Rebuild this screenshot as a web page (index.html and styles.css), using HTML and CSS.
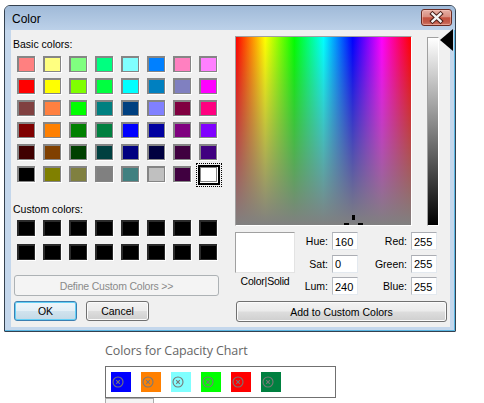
FILE: index.html
```html
<!DOCTYPE html>
<html>
<head>
<meta charset="utf-8">
<link rel="stylesheet" href="styles.css">
</head>
<body>
<div class="screen">
  <div class="dialog">
    <div class="titlebar">
      <span class="title">Color</span>
      <div class="close">
        <svg width="29" height="15" viewBox="0 0 29 15">
          <path d="M10.5 3.8 L18.5 11.2 M18.5 3.8 L10.5 11.2" stroke="#4a1d16" stroke-width="4.4" stroke-linecap="square" fill="none"/>
          <path d="M10.5 3.8 L18.5 11.2 M18.5 3.8 L10.5 11.2" stroke="#f4f4f4" stroke-width="2.4" stroke-linecap="square" fill="none"/>
        </svg>
      </div>
    </div>
    <div class="frame">
      <div class="client">
        <div class="left">
          <div class="lbl basic-lbl">Basic colors:</div>
          <div class="grid basic">
            <div class="sw" style="background:#FF8080"></div><div class="sw" style="background:#FFFF80"></div><div class="sw" style="background:#80FF80"></div><div class="sw" style="background:#00FF80"></div><div class="sw" style="background:#80FFFF"></div><div class="sw" style="background:#0080FF"></div><div class="sw" style="background:#FF80C0"></div><div class="sw" style="background:#FF80FF"></div>
            <div class="sw" style="background:#FF0000"></div><div class="sw" style="background:#FFFF00"></div><div class="sw" style="background:#80FF00"></div><div class="sw" style="background:#00FF40"></div><div class="sw" style="background:#00FFFF"></div><div class="sw" style="background:#0080C0"></div><div class="sw" style="background:#8080C0"></div><div class="sw" style="background:#FF00FF"></div>
            <div class="sw" style="background:#804040"></div><div class="sw" style="background:#FF8040"></div><div class="sw" style="background:#00FF00"></div><div class="sw" style="background:#008080"></div><div class="sw" style="background:#004080"></div><div class="sw" style="background:#8080FF"></div><div class="sw" style="background:#800040"></div><div class="sw" style="background:#FF0080"></div>
            <div class="sw" style="background:#800000"></div><div class="sw" style="background:#FF8000"></div><div class="sw" style="background:#008000"></div><div class="sw" style="background:#008040"></div><div class="sw" style="background:#0000FF"></div><div class="sw" style="background:#0000A0"></div><div class="sw" style="background:#800080"></div><div class="sw" style="background:#8000FF"></div>
            <div class="sw" style="background:#400000"></div><div class="sw" style="background:#804000"></div><div class="sw" style="background:#004000"></div><div class="sw" style="background:#004040"></div><div class="sw" style="background:#000080"></div><div class="sw" style="background:#000040"></div><div class="sw" style="background:#400040"></div><div class="sw" style="background:#400080"></div>
            <div class="sw" style="background:#000000"></div><div class="sw" style="background:#808000"></div><div class="sw" style="background:#808040"></div><div class="sw" style="background:#808080"></div><div class="sw" style="background:#408080"></div><div class="sw" style="background:#C0C0C0"></div><div class="sw" style="background:#400040"></div><div class="sw sel" style="background:#FFFFFF"></div>
          </div>
          <div class="lbl custom-lbl">Custom colors:</div>
          <div class="grid custom">
            <div class="sw"></div><div class="sw"></div><div class="sw"></div><div class="sw"></div><div class="sw"></div><div class="sw"></div><div class="sw"></div><div class="sw"></div>
            <div class="sw"></div><div class="sw"></div><div class="sw"></div><div class="sw"></div><div class="sw"></div><div class="sw"></div><div class="sw"></div><div class="sw"></div>
          </div>
          <div class="btn define">Define Custom Colors &gt;&gt;</div>
          <div class="btnrow">
            <div class="btn ok">OK</div>
            <div class="btn cancel">Cancel</div>
          </div>
        </div>
        <div class="right">
          <div class="pickers">
            <div class="spectrum">
              <svg class="cross" width="175" height="188" viewBox="0 0 175 188">
                <rect x="116" y="178" width="3" height="5" fill="#000"/>
                <rect x="108" y="186" width="5" height="3" fill="#000"/>
                <rect x="122" y="186" width="5" height="3" fill="#000"/>
              </svg>
            </div>
            <div class="lum"></div>
            <svg class="arrow" width="14" height="23" viewBox="0 0 14 23">
              <polygon points="13,0 0,11 13,22" fill="#000"/>
            </svg>
          </div>
          <div class="values">
            <div class="solid">
              <div class="solid-box"></div>
              <div class="solid-lbl">Color|Solid</div>
            </div>
            <div class="fields hsl">
              <label>Hue:</label><input type="text" value="160" readonly>
              <label>Sat:</label><input type="text" value="0" readonly>
              <label>Lum:</label><input type="text" value="240" readonly>
            </div>
            <div class="fields rgb">
              <label>Red:</label><input type="text" value="255" readonly>
              <label>Green:</label><input type="text" value="255" readonly>
              <label>Blue:</label><input type="text" value="255" readonly>
            </div>
          </div>
          <div class="btn add">Add to Custom Colors</div>
        </div>
      </div>
    </div>
  </div>

  <div class="chart-section">
    <div class="caption">Colors for Capacity Chart</div>
    <div class="chart">
      <div class="chip" style="background:#0000FF"><svg class="rm" width="12" height="12" viewBox="0 0 12 12"><circle cx="6" cy="6" r="5"/><path d="M4.2 4.2 L7.8 7.8 M7.8 4.2 L4.2 7.8"/></svg></div>
      <div class="chip" style="background:#FF8000"><svg class="rm" width="12" height="12" viewBox="0 0 12 12"><circle cx="6" cy="6" r="5"/><path d="M4.2 4.2 L7.8 7.8 M7.8 4.2 L4.2 7.8"/></svg></div>
      <div class="chip" style="background:#80FFFF"><svg class="rm" width="12" height="12" viewBox="0 0 12 12"><circle cx="6" cy="6" r="5"/><path d="M4.2 4.2 L7.8 7.8 M7.8 4.2 L4.2 7.8"/></svg></div>
      <div class="chip" style="background:#00FF00"><svg class="rm" width="12" height="12" viewBox="0 0 12 12"><circle cx="6" cy="6" r="5"/><path d="M4.2 4.2 L7.8 7.8 M7.8 4.2 L4.2 7.8"/></svg></div>
      <div class="chip" style="background:#FF0000"><svg class="rm" width="12" height="12" viewBox="0 0 12 12"><circle cx="6" cy="6" r="5"/><path d="M4.2 4.2 L7.8 7.8 M7.8 4.2 L4.2 7.8"/></svg></div>
      <div class="chip" style="background:#008040"><svg class="rm" width="12" height="12" viewBox="0 0 12 12"><circle cx="6" cy="6" r="5"/><path d="M4.2 4.2 L7.8 7.8 M7.8 4.2 L4.2 7.8"/></svg></div>
    </div>
    <div class="under"></div>
  </div>
</div>
</body>
</html>
```

FILE: styles.css
```css
html, body {
  margin: 0;
  background: #fff;
}
body {
  font-family: "Liberation Sans", Arial, sans-serif;
  font-size: 10.5px;
  color: #000;
}
.screen {
  padding: 5px 0 0 4px;
}

/* ---------- dialog window ---------- */
.dialog {
  width: 452px;
  box-sizing: border-box;
  border: 1px solid #34414f;
  border-radius: 6px 6px 1px 1px;
  background: #c4d7ec;
  box-shadow: inset -1px -1px 0 #5ab6e2;
}
.titlebar {
  height: 24px;
  display: flex;
  justify-content: space-between;
  align-items: flex-start;
  padding: 0 3px 0 7px;
  background: linear-gradient(#a0bad8, #bcd1e9);
  border-radius: 5px 5px 0 0;
}
.title {
  font-size: 12px;
  line-height: 24px;
  padding-top: 1px;
}
.close {
  margin-top: 3px;
  width: 31px;
  height: 17px;
  box-sizing: border-box;
  border: 1px solid #6b2b22;
  border-radius: 3px;
  background: linear-gradient(#e6b0a6 0%, #d98e80 45%, #c4513f 52%, #c25a49 80%, #d27a68 100%);
  box-shadow: inset 0 0 0 1px rgba(255, 210, 200, 0.45);
  display: flex;
}
.frame {
  padding: 0 5px 4px 6px;
}
.client {
  background: #f0f0f0;
  width: 439px;
  height: 297px;
  display: flex;
}

/* ---------- left column ---------- */
.left {
  width: 224px;
  flex-shrink: 0;
  display: flex;
  flex-direction: column;
  align-items: flex-start;
}
.lbl {
  line-height: 13px;
  margin-left: 2px;
  white-space: nowrap;
}
.basic-lbl {
  margin-top: 8px;
}
.custom-lbl {
  margin-top: 21px;
}
.grid {
  display: grid;
  grid-template-columns: repeat(8, 18px);
  grid-auto-rows: 16px;
  column-gap: 8px;
  margin-left: 6px;
}
.grid.basic {
  margin-top: 5px;
  row-gap: 6px;
}
.grid.custom {
  margin-top: 4px;
  row-gap: 8px;
}
.sw {
  box-sizing: border-box;
  border-style: solid;
  border-width: 2px 1px 1px 2px;
  border-color: #858585;
  box-shadow: 1px 1px 0 #fff;
  position: relative;
}
.custom .sw {
  background: #000;
  border-color: #2a2a2a;
}
.sw.sel::before {
  content: "";
  position: absolute;
  left: -3px;
  top: -3px;
  right: -4px;
  bottom: -4px;
  border: 2px solid #000;
}
.sw.sel::after {
  content: "";
  position: absolute;
  left: -5px;
  top: -5px;
  right: -6px;
  bottom: -6px;
  border: 1px dotted #000;
}

/* ---------- buttons ---------- */
.btn {
  box-sizing: border-box;
  display: flex;
  align-items: center;
  justify-content: center;
  border: 1px solid #707070;
  border-radius: 3px;
  background: linear-gradient(#f3f3f3 0%, #ebebeb 48%, #dddddd 52%, #cfcfcf 100%);
  box-shadow: inset 0 0 0 1px #fbfbfb;
  white-space: nowrap;
  flex-shrink: 0;
}
.define {
  margin: 15px 0 0 3px;
  width: 205px;
  height: 21px;
  color: #8a8a8a;
  background: #f4f4f4;
  border-color: #adb2b5;
  box-shadow: none;
  letter-spacing: -0.2px;
}
.btnrow {
  display: flex;
  gap: 9px;
  margin: 5px 0 0 3px;
}
.ok, .cancel {
  width: 63px;
  height: 20px;
}
.ok {
  border-color: #3c7fb1;
  box-shadow: inset 0 0 0 1px #63d0f6;
  background: linear-gradient(#eef6fb 0%, #e3eff6 48%, #d0e3ee 52%, #c4d9e6 100%);
}

/* ---------- right column ---------- */
.right {
  flex-shrink: 0;
  display: flex;
  flex-direction: column;
  align-items: flex-start;
}
.pickers {
  display: flex;
  align-items: flex-start;
  margin-top: 6px;
}
.spectrum {
  flex-shrink: 0;
  width: 177px;
  height: 190px;
  box-sizing: border-box;
  border: 1px solid;
  border-color: #a0a0a0 #fff #fff #a0a0a0;
  position: relative;
  overflow: hidden;
  background:
    linear-gradient(to bottom, rgba(128, 128, 128, 0), #808080),
    linear-gradient(to right, #ff0000 0%, #ffff00 16.67%, #00ff00 33.33%, #00ffff 50%, #0000ff 66.67%, #ff00ff 83.33%, #ff0000 100%);
}
.cross {
  position: absolute;
  left: 0;
  top: 0;
}
.lum {
  flex-shrink: 0;
  width: 12px;
  height: 189px;
  margin: 1px 0 0 15px;
  box-sizing: border-box;
  border: 1px solid;
  border-color: #a0a0a0 #fff #fff #a0a0a0;
  background: linear-gradient(#ffffff, #000000);
}
.arrow {
  display: block;
  flex-shrink: 0;
  margin: -7px 0 0 1px;
}
.values {
  display: flex;
  margin-top: 6px;
}
.solid {
  width: 60px;
}
.solid-box {
  height: 41px;
  box-sizing: border-box;
  border: 1px solid;
  border-color: #a0a0a0 #e3e3e3 #e3e3e3 #a0a0a0;
  background: #fff;
}
.solid-lbl {
  margin-top: 2px;
  line-height: 13px;
  text-align: center;
  white-space: nowrap;
  letter-spacing: -0.2px;
}
.fields {
  display: grid;
  grid-template-columns: 33px 26px;
  grid-auto-rows: 18px;
  column-gap: 4px;
  row-gap: 4.5px;
  align-items: center;
}
.fields.rgb {
  grid-template-columns: 49px 26px;
}
.fields label {
  text-align: right;
  white-space: nowrap;
}
.fields input {
  box-sizing: border-box;
  width: 26px;
  height: 18px;
  margin: 0;
  padding: 1px 0 0 2px;
  border: 1px solid;
  border-color: #abadb3 #e3e9ef #e3e9ef #b8bcc2;
  background: #fff;
  font: inherit;
  font-size: 11px;
  color: #000;
  outline: none;
}
.add {
  margin: 6px 0 0 1px;
  width: 211px;
  height: 21px;
}

/* ---------- page below ---------- */
.chart-section {
  margin: 10px 0 0 101px;
}
.caption {
  font-family: "Open Sans", "Noto Sans", sans-serif;
  font-size: 12.5px;
  letter-spacing: -0.1px;
  line-height: 18px;
  color: #666;
}
.chart {
  margin-top: 6px;
  width: 231px;
  height: 32px;
  box-sizing: border-box;
  border: 1px solid #707070;
  padding: 5px 0 0 5px;
  display: flex;
  gap: 10px;
}
.chip {
  flex-shrink: 0;
  width: 20px;
  height: 20px;
  display: flex;
  align-items: center;
  padding-left: 1px;
  box-sizing: border-box;
}
.rm {
  display: block;
  fill: none;
  stroke: #787878;
  stroke-width: 1.1;
}
.under {
  width: 49px;
  height: 12px;
  box-sizing: border-box;
  border: 1px solid #ababab;
  border-bottom: none;
  background: #f4f4f4;
}
```
